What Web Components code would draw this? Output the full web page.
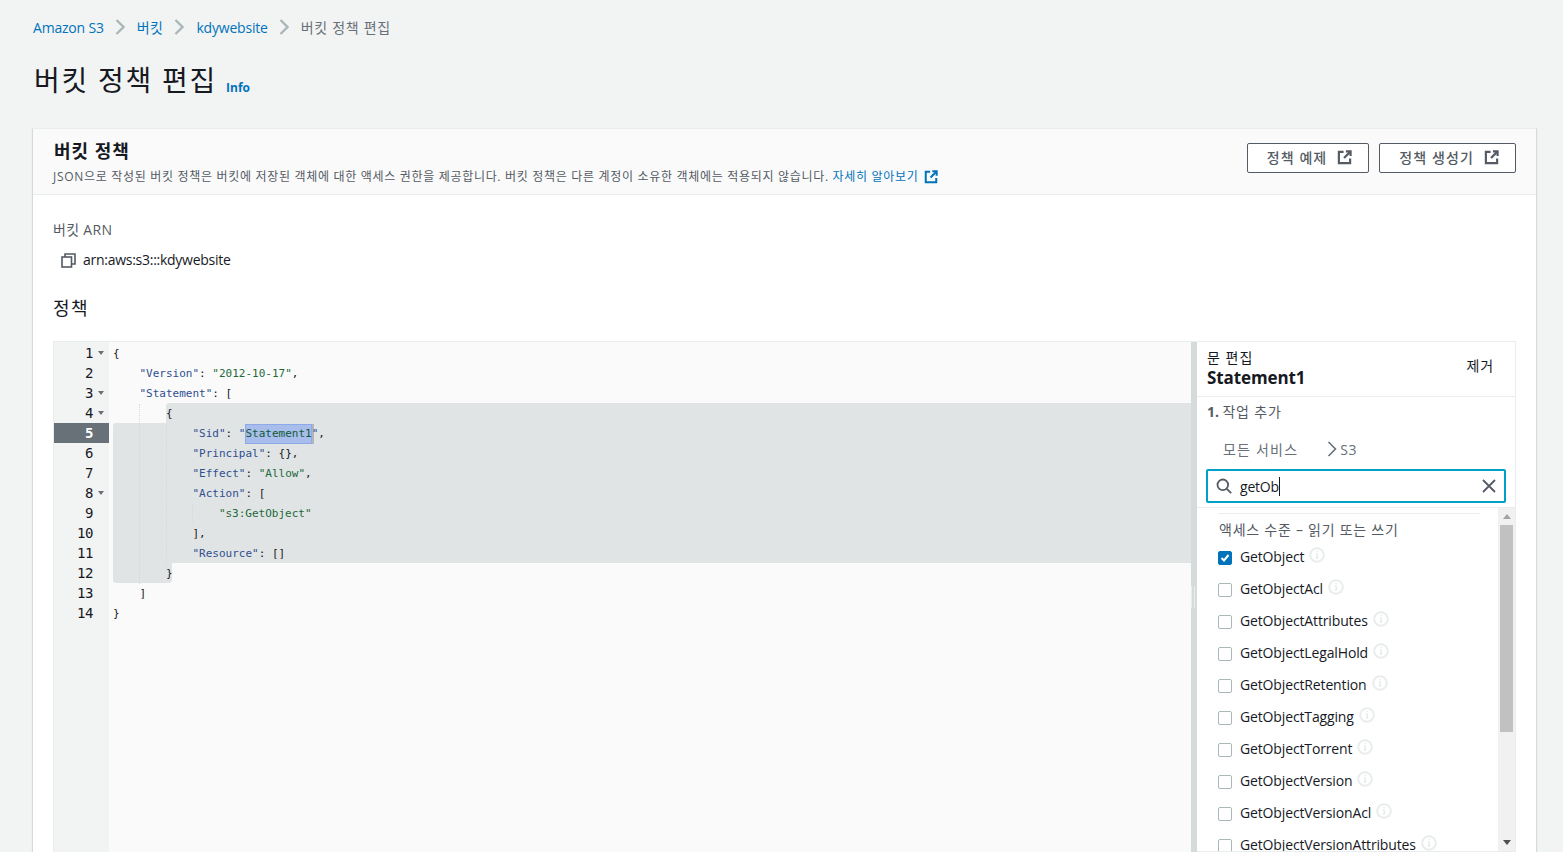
<!DOCTYPE html>
<html lang="ko">
<head>
<meta charset="utf-8">
<title>버킷 정책 편집</title>
<style>
  html, body { margin: 0; height: 852px; overflow: hidden; background: #f2f3f3; }
  body {
    font-family: "Open Sans", "Noto Sans CJK KR", sans-serif;
    font-size: 14px;
    color: #16191f;
  }
</style>
</head>
<body>
<s3-page>
  <s3-breadcrumbs></s3-breadcrumbs>
  <s3-title>버킷 정책 편집</s3-title>
  <s3-card>
    <policy-editor></policy-editor>
  </s3-card>
</s3-page>

<script>
const EXT_ICON = (color, size) => `
  <svg width="${size}" height="${size}" viewBox="0 0 16 16" fill="none" stroke="${color}" stroke-width="2.3" style="flex:none">
    <path d="M7 2H2v12h12V9"/><path d="M9.5 1.5h5v5"/><path d="M14 2L7.5 8.5"/>
  </svg>`;

class S3Page extends HTMLElement {
  connectedCallback() {
    this.attachShadow({ mode: 'open' }).innerHTML = `
      <style>
        :host { display: block; padding: 17px 26px 0 32px; }
      </style>
      <slot></slot>`;
  }
}
customElements.define('s3-page', S3Page);

class S3Breadcrumbs extends HTMLElement {
  connectedCallback() {
    const chevron = `<svg width="10" height="16" viewBox="0 0 10 16" fill="none" stroke="#aab7b8" stroke-width="2.3"><path d="M1.5 1l7 7-7 7"/></svg>`;
    this.attachShadow({ mode: 'open' }).innerHTML = `
      <style>
        :host { display: flex; align-items: center; height: 20px; padding-left: 1px; font-size: 14px; }
        a { color: #0073bb; text-decoration: none; letter-spacing: -.2px; }
        a.ko { letter-spacing: .5px; }
        span { color: #687078; letter-spacing: .7px; }
        svg { margin: 0 12px 0 11px; }
      </style>
      <a>Amazon S3</a>${chevron}<a class="ko">버킷</a>${chevron}<a>kdywebsite</a>${chevron}<span>버킷 정책 편집</span>`;
  }
}
customElements.define('s3-breadcrumbs', S3Breadcrumbs);

class S3Title extends HTMLElement {
  connectedCallback() {
    this.attachShadow({ mode: 'open' }).innerHTML = `
      <style>
        :host { display: flex; align-items: baseline; margin-top: 22px; height: 69px; padding-left: 2px; }
        h1 { margin: 0; font-size: 28px; line-height: 42px; font-weight: 400; letter-spacing: 1.75px; color: #16191f; }
        a { margin-left: 9px; font-size: 12px; font-weight: 700; color: #0073bb; position: relative; top: 1px; }
      </style>
      <h1><slot></slot></h1><a>Info</a>`;
  }
}
customElements.define('s3-title', S3Title);

class S3Button extends HTMLElement {
  connectedCallback() {
    this.attachShadow({ mode: 'open' }).innerHTML = `
      <style>
        :host {
          display: flex; align-items: center; justify-content: center; gap: 10px;
          box-sizing: border-box; height: 30px; padding: 0 16px 2px 19px;
          border: 1px solid #545b64; border-radius: 2px; background: #fff;
          color: #545b64; font-size: 14px; font-weight: 500; letter-spacing: 1.1px;
        }
      </style>
      <slot></slot>${EXT_ICON('#545b64', 15)}`;
  }
}
customElements.define('s3-button', S3Button);

class S3Card extends HTMLElement {
  connectedCallback() {
    this.attachShadow({ mode: 'open' }).innerHTML = `
      <style>
        :host {
          display: block; background: #fff; height: 740px;
          border: 1px solid #d5dbdb; border-bottom: 0; border-top-color: #eaeded;
          box-shadow: 0 1px 1px rgba(0,28,36,.1);
        }
        header {
          display: flex; justify-content: space-between; box-sizing: border-box;
          height: 66px; padding: 10px 20px 0; background: #fafafa; border-bottom: 1px solid #eaeded;
        }
        h2 { margin: 0 0 0 1px; font-size: 18px; line-height: 25px; font-weight: 700; letter-spacing: 1px; color: #16191f; }
        p { display: flex; align-items: center; gap: 5px; margin: 4px 0 0; font-size: 12px; line-height: 18px; letter-spacing: .69px; color: #545b64; }
        p a { color: #0073bb; }
        .actions { display: flex; gap: 10px; padding-top: 4px; }
        .body { padding: 25px 20px 0; }
        label { display: block; color: #545b64; font-size: 14px; line-height: 20px; letter-spacing: .3px; }
        .arn { display: flex; align-items: center; gap: 7px; margin: 10px 0 0 8px; height: 20px; line-height: 20px; letter-spacing: -.27px; }
        h3 { margin: 25px 0 0; font-size: 18px; line-height: 26px; font-weight: 400; letter-spacing: 1.5px; color: #16191f; }
        .slot { display: block; margin-top: 20px; }
      </style>
      <header>
        <div>
          <h2>버킷 정책</h2>
          <p><span>JSON으로 작성된 버킷 정책은 버킷에 저장된 객체에 대한 액세스 권한을 제공합니다. 버킷 정책은 다른 계정이 소유한 객체에는 적용되지 않습니다. <a>자세히 알아보기</a></span>${EXT_ICON('#0073bb', 14)}</p>
        </div>
        <div class="actions"><s3-button>정책 예제</s3-button><s3-button>정책 생성기</s3-button></div>
      </header>
      <div class="body">
        <label>버킷 ARN</label>
        <div class="arn">
          <svg width="15" height="15" viewBox="0 0 15 15" fill="none" stroke="#545b64" stroke-width="1.6"><rect x="1" y="4" width="9.5" height="10"/><path d="M4 4V1h10v10h-3.5"/></svg>
          <span>arn:aws:s3:::kdywebsite</span>
        </div>
        <h3>정책</h3>
        <div class="slot"><slot></slot></div>
      </div>`;
  }
}
customElements.define('s3-card', S3Card);

const k = s => `<i class="k">${s}</i>`;
const v = s => `<i class="v">${s}</i>`;
const b = s => `<i class="b">${s}</i>`;
const CODE = [
  [0, b('{')],
  [1, `${k('"Version"')}: ${v('"2012-10-17"')},`],
  [1, `${k('"Statement"')}: ${b('[')}`],
  [2, b('{')],
  [3, `${k('"Sid"')}: ${k('"')}<i class="v sel">Statement1</i>${k('"')},`],
  [3, `${k('"Principal"')}: ${b('{}')},`],
  [3, `${k('"Effect"')}: ${v('"Allow"')},`],
  [3, `${k('"Action"')}: ${b('[')}`],
  [4, v('"s3:GetObject"')],
  [3, `${b(']')},`],
  [3, `${k('"Resource"')}: ${b('[]')}`],
  [2, b('}')],
  [1, b(']')],
  [0, b('}')],
];
const FOLDS = [1, 3, 4, 8];

class PolicyEditor extends HTMLElement {
  connectedCallback() {
    const gutter = CODE.map((_, i) => {
      const n = i + 1;
      const fold = FOLDS.includes(n) ? '<svg width="6" height="4" viewBox="0 0 6 4"><path d="M0 0h6L3 4z" fill="#687078"/></svg>' : '';
      return `<div class="num${n === 5 ? ' cur' : ''}"><b>${n}</b><span class="fold">${fold}</span></div>`;
    }).join('');
    const lines = CODE.map(([depth, html]) => {
      const guides = Array.from({ length: depth }, () => '<u></u>').join('');
      return `<div class="line">${guides}<span>${html}</span></div>`;
    }).join('');
    this.attachShadow({ mode: 'open' }).innerHTML = `
      <style>
        :host {
          display: flex; height: 511px; box-sizing: border-box; background: #fafafa;
          border: 1px solid #eaeded; border-bottom: 0; overflow: hidden;
        }
        .gutter { width: 55px; flex: none; padding-top: 1px; background: #f2f3f3; color: #16191f; font: 14px/20px "DejaVu Sans Mono", monospace; letter-spacing: -.4px; }
        .num { display: flex; justify-content: flex-end; align-items: center; height: 20px; }
        .num b { font-weight: 400; }
        .fold { display: flex; align-items: center; justify-content: center; width: 16px; }
        .cur { background: #687078; color: #fff; }
        .cur b { font-weight: 700; }
        .code { position: relative; flex: 1; min-width: 0; padding: 2px 0 0 4px; font: 11px/20px "DejaVu Sans Mono", monospace; }
        .marker { position: absolute; background: #e1e4e5; }
        .m1 { left: 57px; right: 0; top: 61px; height: 20px; border-top-left-radius: 3px; }
        .m2 { left: 4px; right: 0; top: 81px; height: 140px; border-top-left-radius: 3px; }
        .m3 { left: 4px; width: 59px; top: 221px; height: 20px; border-radius: 0 0 3px 3px; }
        .line { position: relative; display: flex; height: 20px; white-space: pre; }
        u { display: block; width: 26.48px; height: 20px; box-sizing: border-box; border-left: 1px dotted #d5dbdb; text-decoration: none; }
        u:first-child { border-left-color: transparent; }
        i { font-style: normal; }
        .k { color: #2f4f8f; }
        .v { color: #1d6a3a; }
        .b { color: #16191f; }
        .sel { display: inline-block; height: 20px; background: #a8bdec; box-shadow: inset 0 0 0 1px #8ea9e8, 2px 0 0 #b3b6b8; color: #0f5c33; }
        .split { display: flex; align-items: center; justify-content: center; width: 6px; flex: none; background: #d5dbdb; }
        .grip { width: 2px; height: 22px; margin-left: -3px; border: solid #eaeded; border-width: 0 1px; }
      </style>
      <div class="gutter">${gutter}</div>
      <div class="code">
        <div class="marker m1"></div><div class="marker m2"></div><div class="marker m3"></div>
        ${lines}
      </div>
      <div class="split"><div class="grip"></div></div>
      <statement-panel></statement-panel>`;
  }
}
customElements.define('policy-editor', PolicyEditor);

class ActionItem extends HTMLElement {
  connectedCallback() {
    const checked = this.hasAttribute('checked');
    this.attachShadow({ mode: 'open' }).innerHTML = `
      <style>
        :host { display: flex; align-items: center; height: 32px; flex: none; font-size: 14px; letter-spacing: -.14px; color: #16191f; }
        .box { box-sizing: border-box; width: 14px; height: 14px; margin: 3px 8px 0 0; border: 1px solid #aab7b8; border-radius: 2px; background: #fff; flex: none; }
        .box.on { background: #0073bb; border-color: #0073bb; }
        .box svg { display: block; }
        .info { margin: -2px 0 0 5px; flex: none; }
      </style>
      <div class="box${checked ? ' on' : ''}">${checked ? '<svg width="12" height="12" viewBox="0 0 12 12" fill="none" stroke="#fff" stroke-width="2"><path d="M2.5 6l2.5 2.5L9.5 3"/></svg>' : ''}</div>
      <slot></slot>
      <svg class="info" width="16" height="16" viewBox="0 0 16 16" fill="none"><circle cx="8" cy="8" r="6.8" stroke="#eaeded" stroke-width="2"/><path d="M8 4v1.6M7 7.3h1.2v3.6M6.8 11h2.6" stroke="#e3e6e6" stroke-width="1.2"/></svg>`;
  }
}
customElements.define('action-item', ActionItem);

class StatementPanel extends HTMLElement {
  connectedCallback() {
    const actions = ['GetObject', 'GetObjectAcl', 'GetObjectAttributes', 'GetObjectLegalHold', 'GetObjectRetention',
      'GetObjectTagging', 'GetObjectTorrent', 'GetObjectVersion', 'GetObjectVersionAcl', 'GetObjectVersionAttributes'];
    const items = actions.map((a, i) => `<action-item${i === 0 ? ' checked' : ''}>${a}</action-item>`).join('');
    this.attachShadow({ mode: 'open' }).innerHTML = `
      <style>
        :host { display: flex; flex-direction: column; box-sizing: border-box; width: 318px; flex: none; background: #fff; overflow: hidden; border-bottom: 1px solid #eaeded; }
        .head { display: flex; justify-content: space-between; align-items: center; box-sizing: border-box; height: 55px; flex: none; padding: 0 21px 0 10px; border-bottom: 1px solid #eaeded; }
        .head small { display: block; font-size: 14px; line-height: 18px; letter-spacing: 1px; }
        .head strong { display: block; font-size: 17px; line-height: 22px; font-weight: 700; letter-spacing: -.1px; }
        .head span { margin-top: -8px; letter-spacing: .9px; }
        .step { padding: 5px 10px 0; height: 24px; flex: none; line-height: 20px; color: #545b64; letter-spacing: .8px; }
        .step b { color: #545b64; letter-spacing: 0; margin-right: -1px; }
        .crumbs { display: flex; align-items: center; height: 20px; flex: none; margin-top: 13px; padding-left: 26px; color: #687078; }
        .crumbs span:first-child { letter-spacing: 1.2px; }
        .crumbs span:last-child { letter-spacing: .5px; }
        .crumbs svg { margin: 0 3px 0 29px; }
        .search { display: flex; align-items: center; box-sizing: border-box; height: 34px; flex: none; margin: 10px 9px 0 9px; padding: 0 8px 0 8px; border: 2px solid #00a1c9; border-radius: 2px; color: #16191f; letter-spacing: -.2px; }
        .search .q { flex: 1; margin-left: 8px; }
        .search .caret { border-right: 1px solid #16191f; padding-right: 0; }
        .results { display: flex; flex: 1; min-height: 0; margin-top: 4px; border-top: 1px solid #eaeded; }
        .list { flex: 1; min-width: 0; padding: 5px 18px 0 21px; overflow: hidden; display: flex; flex-direction: column; }
        .rule { border-top: 1px solid #eaeded; flex: none; }
        .group { color: #545b64; line-height: 20px; margin: 6px 0 0 1px; height: 20px; flex: none; letter-spacing: .75px; }
        .scroll { display: flex; flex-direction: column; align-items: center; width: 17px; flex: none; background: #f1f1f1; }
        .scroll svg { flex: none; margin: 6px 0; }
        .thumb { width: 13px; height: 207px; flex: none; background: #c1c1c1; }
        .grow { flex: 1; }
      </style>
      <div class="head">
        <div><small>문 편집</small><strong>Statement1</strong></div>
        <span>제거</span>
      </div>
      <div class="step"><b>1.</b> 작업 추가</div>
      <div class="crumbs">
        <span>모든 서비스</span>
        <svg width="10" height="16" viewBox="0 0 10 16" fill="none" stroke="#687078" stroke-width="1.6"><path d="M1.5 1l7 7-7 7"/></svg>
        <span>S3</span>
      </div>
      <div class="search">
        <svg width="16" height="16" viewBox="0 0 16 16" fill="none" stroke="#545b64" stroke-width="1.8"><circle cx="6.8" cy="6.8" r="5.3"/><path d="M10.8 10.8l4.4 4.4"/></svg>
        <div class="q"><span class="caret">getOb</span></div>
        <svg width="14" height="14" viewBox="0 0 14 14" fill="none" stroke="#545b64" stroke-width="1.8"><path d="M1 1l12 12M13 1L1 13"/></svg>
      </div>
      <div class="results">
        <div class="list">
          <div class="rule"></div>
          <div class="group">액세스 수준 – 읽기 또는 쓰기</div>
          ${items}
        </div>
        <div class="scroll">
          <svg width="8" height="5" viewBox="0 0 8 5"><path d="M0 5h8L4 0z" fill="#a3a3a3"/></svg>
          <div class="thumb"></div>
          <div class="grow"></div>
          <svg width="8" height="5" viewBox="0 0 8 5"><path d="M0 0h8L4 5z" fill="#505050"/></svg>
        </div>
      </div>`;
  }
}
customElements.define('statement-panel', StatementPanel);
</script>
</body>
</html>
